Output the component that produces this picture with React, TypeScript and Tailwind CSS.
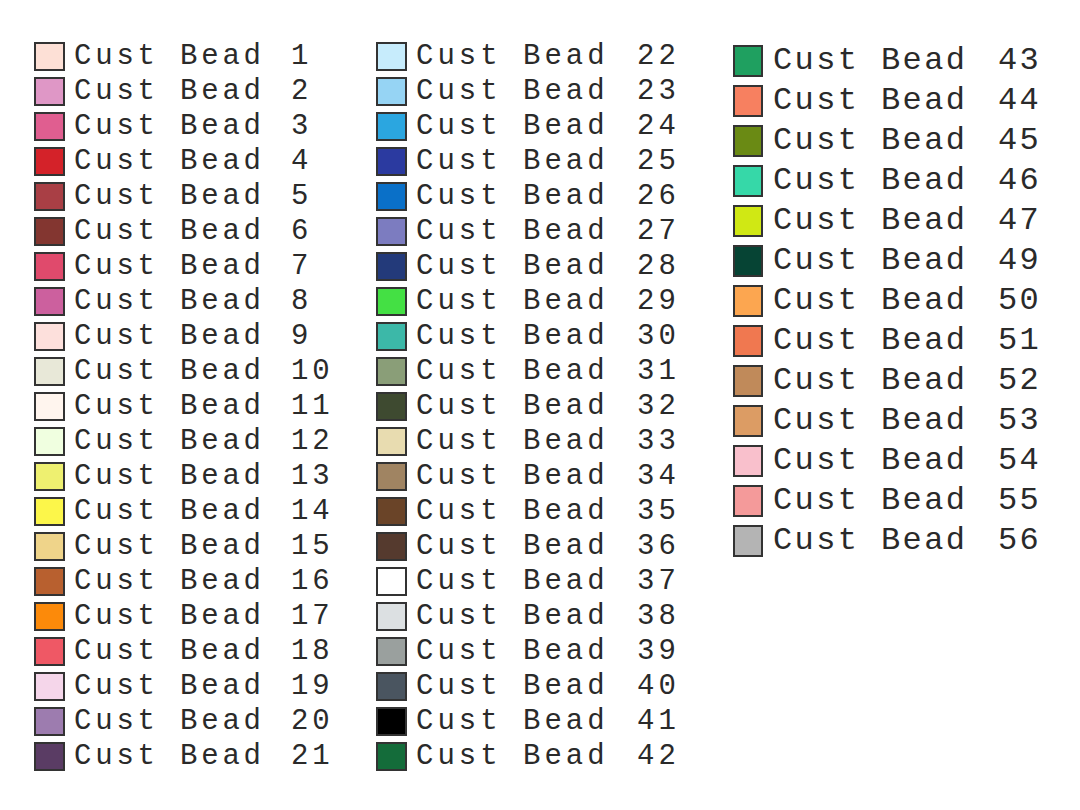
import React from "react";

type Bead = { n: number; c: string };

const col1: Bead[] = [
  { n: 1, c: "#fde0d6" },
  { n: 2, c: "#df97c6" },
  { n: 3, c: "#e05e90" },
  { n: 4, c: "#d42229" },
  { n: 5, c: "#a93f45" },
  { n: 6, c: "#833630" },
  { n: 7, c: "#e04a6c" },
  { n: 8, c: "#cc609e" },
  { n: 9, c: "#fde0dc" },
  { n: 10, c: "#e8e8d8" },
  { n: 11, c: "#fff5ee" },
  { n: 12, c: "#f0ffe0" },
  { n: 13, c: "#eef070" },
  { n: 14, c: "#fcf64a" },
  { n: 15, c: "#efd48a" },
  { n: 16, c: "#b8602f" },
  { n: 17, c: "#fc8a0a" },
  { n: 18, c: "#ef5865" },
  { n: 19, c: "#f5d6ea" },
  { n: 20, c: "#9d7caf" },
  { n: 21, c: "#5a3c64" },
];

const col2: Bead[] = [
  { n: 22, c: "#c7ecfc" },
  { n: 23, c: "#96d4f4" },
  { n: 24, c: "#2ba6e0" },
  { n: 25, c: "#2b3aa0" },
  { n: 26, c: "#0a70c8" },
  { n: 27, c: "#7c7cc0" },
  { n: 28, c: "#233a7a" },
  { n: 29, c: "#44e044" },
  { n: 30, c: "#3cb8a8" },
  { n: 31, c: "#8a9e78" },
  { n: 32, c: "#3e4a30" },
  { n: 33, c: "#e8dcb0" },
  { n: 34, c: "#a08462" },
  { n: 35, c: "#6a4428" },
  { n: 36, c: "#553a2e" },
  { n: 37, c: "#ffffff" },
  { n: 38, c: "#dce0e2" },
  { n: 39, c: "#9aa09e" },
  { n: 40, c: "#4a5560" },
  { n: 41, c: "#000000" },
  { n: 42, c: "#146c3a" },
];

const col3: Bead[] = [
  { n: 43, c: "#1fa060" },
  { n: 44, c: "#f78060" },
  { n: 45, c: "#6a8a14" },
  { n: 46, c: "#36d8a8" },
  { n: 47, c: "#d0e814" },
  { n: 49, c: "#064434" },
  { n: 50, c: "#fca650" },
  { n: 51, c: "#f07850" },
  { n: 52, c: "#c08a5a" },
  { n: 53, c: "#dc9c64" },
  { n: 54, c: "#f9c0cc" },
  { n: 55, c: "#f49a9a" },
  { n: 56, c: "#b4b4b4" },
];

const font = { fontFamily: "'Liberation Mono', 'Courier New', monospace" };

export default function App() {
  return (
    <div
      className="w-[1080px] h-[810px] bg-white text-[#2a2a2a] flex items-start pl-[34px]"
      style={font}
    >
      <div className="w-[342px] flex flex-col pt-[39px]">
        {col1.map((b) => (
          <div key={b.n} className="h-[35px] flex items-center">
            <div
              className="w-[31px] h-[29px] border-2 border-[#333] shrink-0"
              style={{ backgroundColor: b.c }}
            />
            <span className="ml-[9px] w-[217px] text-[29px] leading-none tracking-[3.8px] whitespace-pre">
              Cust Bead
            </span>
            <span className="text-[29px] leading-none tracking-[3.8px]">{b.n}</span>
          </div>
        ))}
      </div>
      <div className="w-[357px] flex flex-col pt-[39px]">
        {col2.map((b) => (
          <div key={b.n} className="h-[35px] flex items-center">
            <div
              className="w-[31px] h-[29px] border-2 border-[#333] shrink-0"
              style={{ backgroundColor: b.c }}
            />
            <span className="ml-[9px] w-[221px] text-[29px] leading-none tracking-[4px] whitespace-pre">
              Cust Bead
            </span>
            <span className="text-[29px] leading-none tracking-[4px]">{b.n}</span>
          </div>
        ))}
      </div>
      <div className="flex flex-col pt-[41px]">
        {col3.map((b) => (
          <div key={b.n} className="h-[40px] flex items-center">
            <div
              className="w-[30px] h-[32px] border-2 border-[#333] shrink-0"
              style={{ backgroundColor: b.c }}
            />
            <span className="ml-[10px] w-[225px] text-[32px] leading-none tracking-[2.4px] whitespace-pre">
              Cust Bead
            </span>
            <span className="text-[32px] leading-none tracking-[2.4px]">{b.n}</span>
          </div>
        ))}
      </div>
    </div>
  );
}
